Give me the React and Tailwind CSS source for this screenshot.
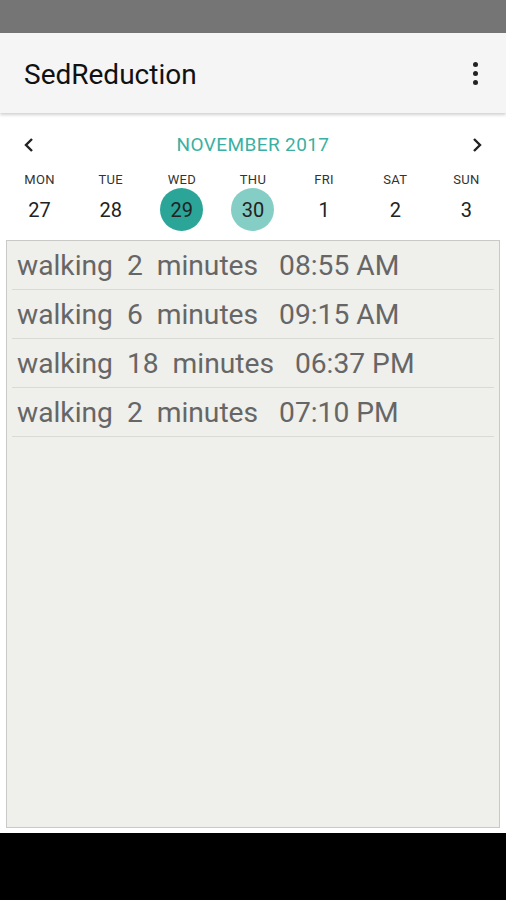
import React from "react";

const days = [
  ["MON", "27"],
  ["TUE", "28"],
  ["WED", "29"],
  ["THU", "30"],
  ["FRI", "1"],
  ["SAT", "2"],
  ["SUN", "3"],
];

const rows = [
  "walking  2  minutes   08:55 AM",
  "walking  6  minutes   09:15 AM",
  "walking  18  minutes   06:37 PM",
  "walking  2  minutes   07:10 PM",
];

export default function App() {
  return (
    <div className="w-[506px] h-[900px] flex flex-col bg-white overflow-hidden" style={{ fontFamily: "Roboto, 'Noto Sans', sans-serif" }}>
      <div className="h-[33px] bg-[#757575] shrink-0" />
      <div className="h-[80px] bg-[#f5f5f5] flex items-center justify-between pl-[24px] pr-[28px] shadow-[0_2px_3px_rgba(0,0,0,0.18)] relative z-10 shrink-0">
        <span className="text-[28px] text-[#111] pt-[4px]">SedReduction</span>
        <div className="flex flex-col gap-[4px] items-center">
          <span className="w-[5px] h-[5px] rounded-full bg-[#222]" />
          <span className="w-[5px] h-[5px] rounded-full bg-[#222]" />
          <span className="w-[5px] h-[5px] rounded-full bg-[#222]" />
        </div>
      </div>
      <div className="flex flex-col pt-[20px] shrink-0">
        <div className="flex items-center justify-between h-[24px] px-[23px]">
          <svg width="12" height="16" viewBox="0 0 12 16">
            <path d="M9 2 L3 8 L9 14" fill="none" stroke="#222" strokeWidth="2.4" />
          </svg>
          <span className="text-[19px] text-[#3bb0a2] tracking-[0.4px]">NOVEMBER 2017</span>
          <svg width="12" height="16" viewBox="0 0 12 16">
            <path d="M3 2 L9 8 L3 14" fill="none" stroke="#222" strokeWidth="2.4" />
          </svg>
        </div>
        <div className="grid grid-cols-7 px-[4px] mt-[14px]">
          {days.map(([d, n]) => (
            <div key={d} className="flex flex-col items-center">
              <span className="text-[13px] text-[#333] leading-[18px] h-[18px] tracking-[0.3px]">{d}</span>
              <div
                className={
                  "mt-[-1px] w-[43px] h-[43px] rounded-full flex items-center justify-center text-[20px] text-[#222] " +
                  (n === "29" ? "bg-[#2aa598]" : n === "30" ? "bg-[#84cec5]" : "")
                }
              >
                {n}
              </div>
            </div>
          ))}
        </div>
      </div>
      <div className="mx-[6px] mt-[9px] h-[588px] border-[1.5px] border-[#c9c9c7] bg-[#efefeb] px-[5px] shrink-0">
        {rows.map((r) => (
          <div key={r} className="h-[49px] border-b-[1.5px] border-[#d9d9d5] flex items-center pl-[5px] pt-[3px]">
            <span className="text-[28.2px] text-[#666] whitespace-pre">{r}</span>
          </div>
        ))}
      </div>
      <div className="h-[5px] bg-white shrink-0" />
      <div className="flex-1 bg-black" />
    </div>
  );
}
